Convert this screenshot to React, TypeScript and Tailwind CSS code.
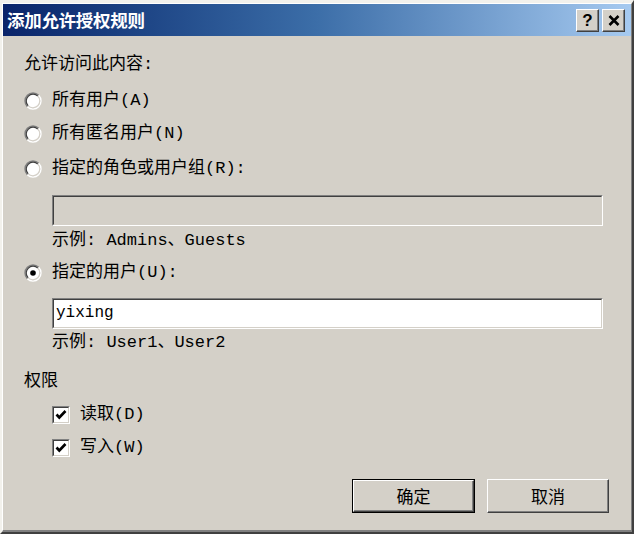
import React from "react";

const font = { fontFamily: '"Liberation Mono", "Noto Sans CJK SC", monospace' };

function Radio({ checked = false }: { checked?: boolean }) {
    const c = 9;
    const arc = (r: number, from: "bl" | "tr") => {
        const d = r * 0.7071;
        const bl = `${c - d} ${c + d}`;
        const tr = `${c + d} ${c - d}`;
        return from === "bl"
            ? `M ${bl} A ${r} ${r} 0 0 1 ${tr}`
            : `M ${tr} A ${r} ${r} 0 0 1 ${bl}`;
    };
    return (
        <svg width="18" height="18" viewBox="0 0 18 18" className="shrink-0">
            <circle cx={c} cy={c} r="7.5" fill="#ffffff" />
            <path d={arc(8, "bl")} stroke="#808080" strokeWidth="1.4" fill="none" />
            <path d={arc(8, "tr")} stroke="#ffffff" strokeWidth="1.4" fill="none" />
            <path d={arc(6.8, "bl")} stroke="#404040" strokeWidth="1.2" fill="none" />
            <path d={arc(6.8, "tr")} stroke="#d4d0c8" strokeWidth="1.2" fill="none" />
            {checked && <circle cx={c} cy={c} r="2.8" fill="#000000" />}
        </svg>
    );
}

function Check() {
    return (
        <div className="w-[18px] h-[18px] shrink-0 border-t-[1px] border-l-[1px] border-r-[1px] border-b-[1px] border-t-[#808080] border-l-[#808080] border-r-white border-b-white">
            <div className="w-full h-full bg-white border-t-[1px] border-l-[1px] border-r-[1px] border-b-[1px] border-t-[#404040] border-l-[#404040] border-r-[#d4d0c8] border-b-[#d4d0c8]">
                <svg width="14" height="14" viewBox="0 0 14 14">
                    <path d="M2.5 6.5 L5.3 9.5 L11.5 3" stroke="#000" strokeWidth="2.6" fill="none" />
                </svg>
            </div>
        </div>
    );
}

function TextBox({ value, disabled }: { value?: string; disabled?: boolean }) {
    return (
        <div className="ml-[28px] w-[551px] h-[31px] border-t-[1px] border-l-[1px] border-r-[1px] border-b-[1px] border-t-[#808080] border-l-[#808080] border-r-white border-b-white">
            <div
                className={`w-full h-full border-t-[1px] border-l-[1px] border-r-[1px] border-b-[1px] border-t-[#404040] border-l-[#404040] border-r-[#d4d0c8] border-b-[#d4d0c8] pl-[2px] text-[16px] leading-[27px] text-black ${disabled ? "bg-[#d4d0c8]" : "bg-white"}`}
            >
                {value}
            </div>
        </div>
    );
}

function RadioRow({ label, checked, className }: { label: string; checked?: boolean; className: string }) {
    return (
        <div className={`flex items-center h-[20px] ${className}`}>
            <Radio checked={checked} />
            <span className="ml-[10px] leading-[20px]">{label}</span>
        </div>
    );
}

function CheckRow({ label, className }: { label: string; className: string }) {
    return (
        <div className={`flex items-center h-[20px] ml-[28px] ${className}`}>
            <Check />
            <span className="ml-[10px] leading-[20px]">{label}</span>
        </div>
    );
}

export default function App() {
    return (
        <div
            className="w-[634px] h-[534px] bg-[#d4d0c8] text-[17px] text-black border-solid border-t-[3px] border-l-[2px] border-r-[2px] border-b-[2px] border-t-[#f2f1ec] border-l-[#f2f1ec] border-r-[#404040] border-b-[#404040]"
            style={font}
        >
            <div className="h-full border-solid border-t-[1px] border-l-[1px] border-r-[1px] border-b-[2px] border-t-white border-l-white border-r-[#808080] border-b-[#808080] flex flex-col">
                {/** Title bar */}
                <div className="h-[32px] shrink-0 flex items-center justify-between pl-[4px] pr-[6px] bg-gradient-to-r from-[#0a246a] via-[#3c6ea8] to-[#a6caf0]">
                    <span className="text-white font-bold text-[17.5px] leading-[20px] tracking-[-0.3px]" style={{ fontFamily: '"Noto Sans CJK SC", sans-serif' }}>
                        添加允许授权规则
                    </span>
                    <div className="flex items-center gap-[3px]">
                        <div className="w-[23px] h-[23px] bg-[#d4d0c8] border-t-[1px] border-l-[1px] border-r-[1px] border-b-[1px] border-t-white border-l-white border-r-[#404040] border-b-[#404040] shadow-[inset_-1px_-1px_0_#808080] flex items-center justify-center">
                            <span className="font-bold text-[17px] leading-none" style={{ fontFamily: '"Liberation Sans", sans-serif' }}>?</span>
                        </div>
                        <div className="w-[23px] h-[23px] bg-[#d4d0c8] border-t-[1px] border-l-[1px] border-r-[1px] border-b-[1px] border-t-white border-l-white border-r-[#404040] border-b-[#404040] shadow-[inset_-1px_-1px_0_#808080] flex items-center justify-center">
                            <svg width="12" height="11" viewBox="0 0 12 11">
                                <path d="M1.5 1 L10.5 10 M10.5 1 L1.5 10" stroke="#000" strokeWidth="2.6" />
                            </svg>
                        </div>
                    </div>
                </div>

                {/** Content */}
                <div className="flex flex-col pl-[21px]">
                    <div className="mt-[19px] h-[20px] leading-[20px]">允许访问此内容:</div>
                    <RadioRow label="所有用户(A)" className="mt-[16px]" />
                    <RadioRow label="所有匿名用户(N)" className="mt-[13px]" />
                    <RadioRow label="指定的角色或用户组(R):" className="mt-[15px]" />
                    <div className="mt-[16px]">
                        <TextBox disabled />
                    </div>
                    <div className="mt-[5px] ml-[28px] h-[20px] leading-[20px]">示例: Admins、Guests</div>
                    <RadioRow label="指定的用户(U):" checked className="mt-[12px]" />
                    <div className="mt-[15px]">
                        <TextBox value="yixing" />
                    </div>
                    <div className="mt-[4px] ml-[28px] h-[20px] leading-[20px]">示例: User1、User2</div>
                    <div className="mt-[19px] h-[20px] leading-[20px]">权限</div>
                    <CheckRow label="读取(D)" className="mt-[13px]" />
                    <CheckRow label="写入(W)" className="mt-[13px]" />

                    {/** Buttons */}
                    <div className="mt-[21px] flex gap-[12px] pl-[328px]">
                        <div className="w-[123px] h-[34px] border-[1px] border-black">
                            <div className="w-full h-full border-t-[1px] border-l-[1px] border-r-[1px] border-b-[1px] border-t-white border-l-white border-r-[#404040] border-b-[#404040] shadow-[inset_-1px_-1px_0_#808080] flex items-center justify-center" style={{ fontFamily: '"Noto Sans CJK SC", sans-serif' }}>
                                确定
                            </div>
                        </div>
                        <div className="w-[122px] h-[34px] border-t-[1px] border-l-[1px] border-r-[1px] border-b-[1px] border-t-white border-l-white border-r-[#404040] border-b-[#404040] shadow-[inset_-1px_-1px_0_#808080] flex items-center justify-center" style={{ fontFamily: '"Noto Sans CJK SC", sans-serif' }}>
                            取消
                        </div>
                    </div>
                </div>
            </div>
        </div>
    );
}
